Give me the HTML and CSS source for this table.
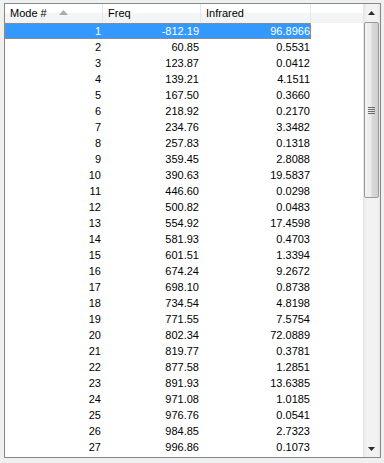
FILE: index.html
```html
<!DOCTYPE html>
<html>
<head>
<meta charset="utf-8">
<link rel="stylesheet" href="styles.css">
</head>
<body>
<div class="frame">
  <div class="list">
    <div class="header">
      <div class="hcell mode"><span>Mode #</span><svg class="sort" width="9" height="5" viewBox="0 0 9 5"><path d="M4.5 0 L9 5 L0 5 Z" fill="#a7abb2"/></svg></div>
      <div class="hcell"><span>Freq</span></div>
      <div class="hcell"><span>Infrared</span></div>
      <div class="hcell filler"></div>
    </div>
    <div class="rows">
      <div class="row selected"><span>1</span><span>-812.19</span><span>96.8966</span></div>
      <div class="row"><span>2</span><span>60.85</span><span>0.5531</span></div>
      <div class="row"><span>3</span><span>123.87</span><span>0.0412</span></div>
      <div class="row"><span>4</span><span>139.21</span><span>4.1511</span></div>
      <div class="row"><span>5</span><span>167.50</span><span>0.3660</span></div>
      <div class="row"><span>6</span><span>218.92</span><span>0.2170</span></div>
      <div class="row"><span>7</span><span>234.76</span><span>3.3482</span></div>
      <div class="row"><span>8</span><span>257.83</span><span>0.1318</span></div>
      <div class="row"><span>9</span><span>359.45</span><span>2.8088</span></div>
      <div class="row"><span>10</span><span>390.63</span><span>19.5837</span></div>
      <div class="row"><span>11</span><span>446.60</span><span>0.0298</span></div>
      <div class="row"><span>12</span><span>500.82</span><span>0.0483</span></div>
      <div class="row"><span>13</span><span>554.92</span><span>17.4598</span></div>
      <div class="row"><span>14</span><span>581.93</span><span>0.4703</span></div>
      <div class="row"><span>15</span><span>601.51</span><span>1.3394</span></div>
      <div class="row"><span>16</span><span>674.24</span><span>9.2672</span></div>
      <div class="row"><span>17</span><span>698.10</span><span>0.8738</span></div>
      <div class="row"><span>18</span><span>734.54</span><span>4.8198</span></div>
      <div class="row"><span>19</span><span>771.55</span><span>7.5754</span></div>
      <div class="row"><span>20</span><span>802.34</span><span>72.0889</span></div>
      <div class="row"><span>21</span><span>819.77</span><span>0.3781</span></div>
      <div class="row"><span>22</span><span>877.58</span><span>1.2851</span></div>
      <div class="row"><span>23</span><span>891.93</span><span>13.6385</span></div>
      <div class="row"><span>24</span><span>971.08</span><span>1.0185</span></div>
      <div class="row"><span>25</span><span>976.76</span><span>0.0541</span></div>
      <div class="row"><span>26</span><span>984.85</span><span>2.7323</span></div>
      <div class="row"><span>27</span><span>996.86</span><span>0.1073</span></div>
    </div>
  </div>
  <div class="scrollbar">
    <div class="sbtn"><svg width="7" height="4" viewBox="0 0 7 4"><path d="M3.5 0 L7 4 L0 4 Z" fill="#2b2b2b"/></svg></div>
    <div class="track">
      <div class="thumb">
        <div class="grip"><i></i><i></i><i></i><i></i></div>
      </div>
    </div>
    <div class="sbtn"><svg width="7" height="4" viewBox="0 0 7 4"><path d="M0 0 L7 0 L3.5 4 Z" fill="#2b2b2b"/></svg></div>
  </div>
</div>
</body>
</html>
```
FILE: styles.css
```css
html, body {
  margin: 0;
  padding: 0;
  background: #f0f0f0;
}
body {
  font-family: "Liberation Sans", Arial, sans-serif;
  font-size: 11px;
  color: #000;
}
.frame {
  margin: 3px 0 0 4px;
  width: 375px;
  height: 453px;
  border: 1px solid #828790;
  background: #fff;
  display: flex;
  overflow: hidden;
}
.list {
  flex: 1;
  display: flex;
  flex-direction: column;
  overflow: hidden;
}
.header {
  display: grid;
  grid-template-columns: 98px 98px 110px 1fr;
  height: 19px;
  background: linear-gradient(#ffffff, #ffffff 50%, #f4f5f7 50%, #f3f4f6);
  border-bottom: 1px solid #f0f1f3;
  box-sizing: border-box;
}
.hcell {
  display: flex;
  align-items: center;
  padding-left: 5px;
  border-right: 1px solid #e3e6eb;
  color: #1e395b;
  color: #000;
}
.hcell.filler {
  border-right: none;
}
.sort {
  margin-left: 12px;
  margin-top: -1px;
}
.rows {
  display: flex;
  flex-direction: column;
}
.row {
  display: grid;
  grid-template-columns: 98px 98px 110px;
  width: 306px;
  height: 16px;
  line-height: 16px;
  box-sizing: border-box;
}
.row span {
  text-align: right;
  padding-right: 2px;
}
.row span:last-child {
  padding-right: 1px;
}
.row.selected {
  background: #3399ff;
  color: #fff;
  outline: 1px dotted #d77f2a;
  outline-offset: -1px;
}
.scrollbar {
  width: 17px;
  display: flex;
  flex-direction: column;
  background: linear-gradient(90deg, #e3e3e3, #f2f2f2 20%, #f2f2f2 80%, #e8e8e8);
}
.sbtn {
  height: 17px;
  display: flex;
  align-items: center;
  justify-content: center;
}
.track {
  flex: 1;
  padding: 1px 0;
}
.thumb {
  margin: 0 1px;
  height: 176px;
  box-sizing: border-box;
  border: 1px solid #9a9a9a;
  border-radius: 2px;
  background: linear-gradient(90deg, #f2f2f2, #ebebeb 45%, #d9d9d9 55%, #cfcfcf);
  display: flex;
  align-items: center;
  justify-content: center;
}
.grip {
  display: flex;
  flex-direction: column;
  gap: 1px;
}
.grip i {
  display: block;
  width: 7px;
  height: 1px;
  background: #6d6d6d;
}
```
